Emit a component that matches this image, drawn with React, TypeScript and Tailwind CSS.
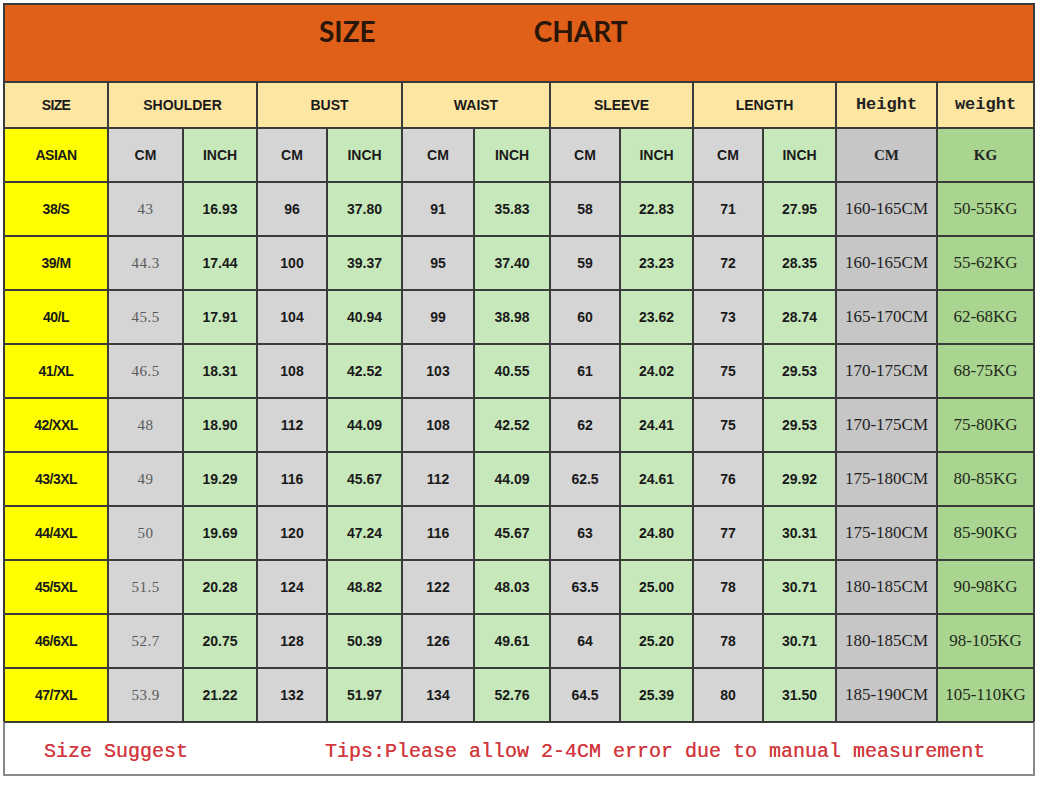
import React from 'react';

const rows = [
  ['38/S', '43', '16.93', '96', '37.80', '91', '35.83', '58', '22.83', '71', '27.95', '160-165CM', '50-55KG'],
  ['39/M', '44.3', '17.44', '100', '39.37', '95', '37.40', '59', '23.23', '72', '28.35', '160-165CM', '55-62KG'],
  ['40/L', '45.5', '17.91', '104', '40.94', '99', '38.98', '60', '23.62', '73', '28.74', '165-170CM', '62-68KG'],
  ['41/XL', '46.5', '18.31', '108', '42.52', '103', '40.55', '61', '24.02', '75', '29.53', '170-175CM', '68-75KG'],
  ['42/XXL', '48', '18.90', '112', '44.09', '108', '42.52', '62', '24.41', '75', '29.53', '170-175CM', '75-80KG'],
  ['43/3XL', '49', '19.29', '116', '45.67', '112', '44.09', '62.5', '24.61', '76', '29.92', '175-180CM', '80-85KG'],
  ['44/4XL', '50', '19.69', '120', '47.24', '116', '45.67', '63', '24.80', '77', '30.31', '175-180CM', '85-90KG'],
  ['45/5XL', '51.5', '20.28', '124', '48.82', '122', '48.03', '63.5', '25.00', '78', '30.71', '180-185CM', '90-98KG'],
  ['46/6XL', '52.7', '20.75', '128', '50.39', '126', '49.61', '64', '25.20', '78', '30.71', '180-185CM', '98-105KG'],
  ['47/7XL', '53.9', '21.22', '132', '51.97', '134', '52.76', '64.5', '25.39', '80', '31.50', '185-190CM', '105-110KG'],
];

const groups = ['SHOULDER', 'BUST', 'WAIST', 'SLEEVE', 'LENGTH'];

const arial = "font-['Liberation_Sans',Arial,sans-serif]";
const serif = "font-['Liberation_Serif','Times_New_Roman',serif]";
const mono = "font-['Liberation_Mono','Courier_New',monospace]";

const cell = 'flex items-center justify-center';

const cellStyle = (i: number) => {
  if (i === 0) return `${cell} bg-[#ffff00] ${arial} font-bold text-[14px] text-[#1a1a1a] tracking-[-0.5px]`;
  if (i === 1) return `${cell} bg-[#d5d5d5] ${serif} text-[15px] text-[#5a5a5a] tracking-[0.5px]`;
  if (i === 11) return `${cell} bg-[#c6c6c6] ${serif} text-[17px] text-[#1f1f1f]`;
  if (i === 12) return `${cell} bg-[#a9d590] ${serif} text-[17px] text-[#1f2a1a]`;
  const isCm = i % 2 === 1;
  return `${cell} ${isCm ? 'bg-[#d5d5d5]' : 'bg-[#c7e8bb]'} ${arial} font-bold text-[14px] text-[#1a1a1a]`;
};

export default function App() {
  return (
    <div className="min-h-screen w-full bg-white pt-[3px] pl-[3px]">
      <div className="w-[1032px]">
        <div className="grid grid-cols-[102px_73px_72px_68px_73px_70px_74px_68px_71px_68px_71px_99px_95px] grid-rows-[76px_44px_52px_repeat(10,52px)] gap-[2px] bg-[#3a3a3a] p-[2px] pb-0">
          {/* title */}
          <div className="col-span-13 flex items-start bg-[#e0601a] pl-[314px] pt-[5px] gap-[158px]">
            <span className="font-['Lato',sans-serif] font-bold text-[28px] text-[#2a1608]">SIZE</span>
            <span className="font-['Lato',sans-serif] font-bold text-[28px] text-[#2a1608]">CHART</span>
          </div>

          {/* header row */}
          <div className={`${cell} bg-[#fde6a2] ${arial} font-bold text-[14px] text-[#1a1a1a] tracking-[-0.6px]`}>SIZE</div>
          {groups.map((g) => (
            <div key={g} className={`${cell} col-span-2 bg-[#fde6a2] ${arial} font-bold text-[14px] text-[#1a1a1a]`}>
              {g}
            </div>
          ))}
          <div className={`${cell} bg-[#fde6a2] ${mono} font-bold text-[17px] text-[#222]`}>Height</div>
          <div className={`${cell} bg-[#fde6a2] ${mono} font-bold text-[17px] text-[#222]`}>weight</div>

          {/* sub header */}
          <div className={`${cell} bg-[#ffff00] ${arial} font-bold text-[14px] text-[#1a1a1a] tracking-[-0.5px]`}>ASIAN</div>
          {groups.map((g) => (
            <React.Fragment key={g}>
              <div className={`${cell} bg-[#d5d5d5] ${arial} font-bold text-[14px] text-[#1a1a1a]`}>CM</div>
              <div className={`${cell} bg-[#c7e8bb] ${arial} font-bold text-[14px] text-[#1a1a1a]`}>INCH</div>
            </React.Fragment>
          ))}
          <div className={`${cell} bg-[#c6c6c6] ${serif} font-bold text-[15px] text-[#222]`}>CM</div>
          <div className={`${cell} bg-[#a9d590] ${serif} font-bold text-[15px] text-[#222]`}>KG</div>

          {/* data */}
          {rows.map((r) =>
            r.map((v, i) => (
              <div key={`${r[0]}-${i}`} className={cellStyle(i)}>
                {v}
              </div>
            ))
          )}
        </div>

        {/* footer */}
        <div className={`flex h-[55px] items-center pt-[6px] border-x-2 border-b-2 border-t-2 border-x-[#8a8a8a] border-b-[#8a8a8a] border-t-[#3a3a3a] bg-white ${mono} text-[20px] text-[#d23a40] [text-shadow:0_0_0.4px_#d23a40]`}>
          <span className="pl-[39px]">Size Suggest</span>
          <span className="pl-[137px]">Tips:Please allow 2-4CM error due to manual measurement</span>
        </div>
      </div>
    </div>
  );
}
